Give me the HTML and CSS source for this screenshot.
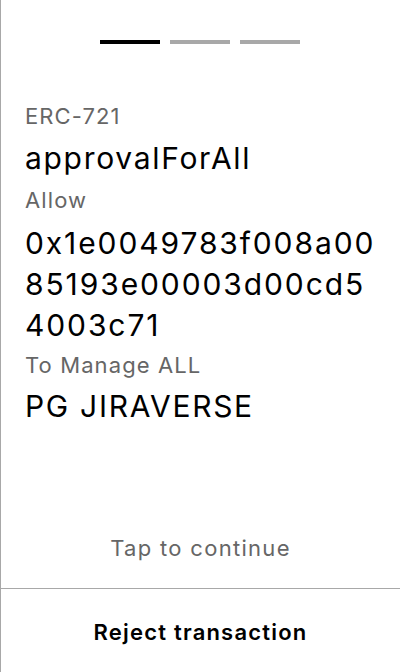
FILE: index.html
```html
<!DOCTYPE html>
<html>
<head>
<meta charset="utf-8">
<link rel="stylesheet" href="styles.css">
</head>
<body>
<div class="screen">
  <div class="progress">
    <span class="bar active"></span>
    <span class="bar"></span>
    <span class="bar"></span>
  </div>
  <div class="content">
    <div class="label">ERC-721</div>
    <div class="value">approvalForAll</div>
    <div class="label">Allow</div>
    <div class="value address">0x1e0049783f008a00<br>85193e00003d00cd5<br>4003c71</div>
    <div class="label">To Manage ALL</div>
    <div class="value">PG JIRAVERSE</div>
  </div>
  <div class="tap">Tap to continue</div>
  <div class="reject">Reject transaction</div>
</div>
</body>
</html>
```
FILE: styles.css
```css
* { box-sizing: border-box; }
html, body { margin: 0; padding: 0; background: #fff; }
body { font-family: Inter, "Noto Sans", sans-serif; color: #000; }
.screen {
  width: 400px;
  height: 672px;
  border-left: 1px solid #a8a8a8;
  display: flex;
  flex-direction: column;
}
.progress {
  display: flex;
  justify-content: center;
  gap: 10px;
  padding-top: 40px;
  padding-right: 1px;
}
.bar {
  width: 60px;
  height: 4px;
  background: #a8a8a8;
}
.bar.active { background: #000; }
.content {
  padding: 58px 20px 0 24px;
  flex: 1;
}
.label {
  font-size: 22px;
  line-height: 28px;
  letter-spacing: 1.1px;
  color: #666;
  margin-top: 10px;
}
.label:first-child { margin-top: 0; }
.value {
  font-size: 30px;
  line-height: 36px;
  letter-spacing: 1.7px;
  margin-top: 9.5px;
}
.address {
  line-height: 41px;
  letter-spacing: 1.9px;
  margin-top: 9px;
}
.address + .label { margin-top: 5px; }
.tap {
  text-align: center;
  font-size: 22px;
  line-height: 28px;
  letter-spacing: 1.3px;
  color: #666;
  padding-bottom: 26px;
}
.reject {
  border-top: 1px solid #a8a8a8;
  height: 84px;
  padding-top: 3px;
  display: flex;
  align-items: center;
  justify-content: center;
  font-size: 22px;
  font-weight: 600;
  letter-spacing: 1.2px;
}
```
